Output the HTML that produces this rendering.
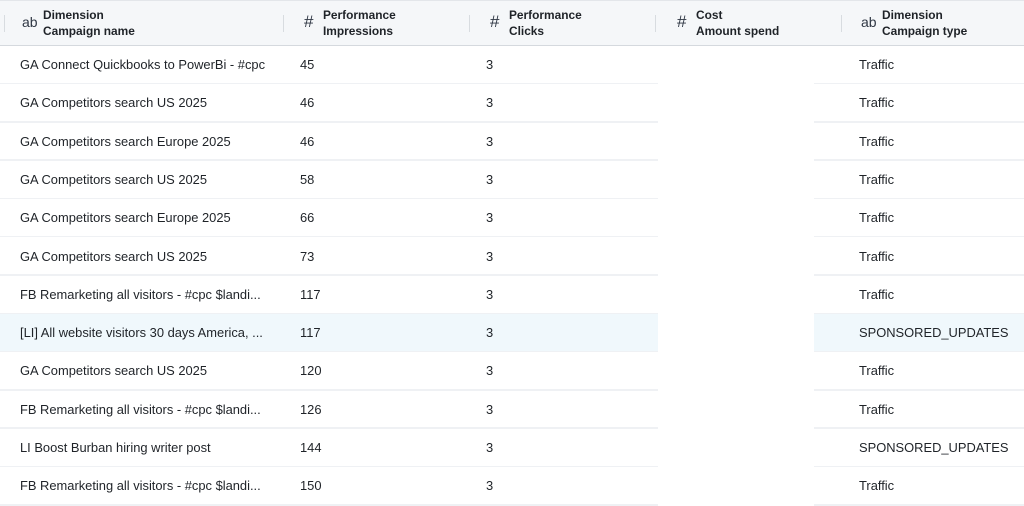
<!DOCTYPE html>
<html><head><meta charset="utf-8"><style>
*{margin:0;padding:0;box-sizing:border-box}
body{width:1024px;height:503px;overflow:hidden;background:#fff;font-family:"Liberation Sans",Arial,sans-serif;color:#1f2328;position:relative}
.hd{position:absolute;left:0;top:0;width:1024px;height:46px;background:#f5f7f9;border-top:1px solid #e3e6ea;border-bottom:1px solid #d5d9de}
.vs{position:absolute;top:14px;width:1px;height:17px;background:#d8dce0}
.ic{position:absolute;top:11px;font-size:17px;color:#2f3744}
.hl{position:absolute;top:6px;font-size:11.9px;font-weight:bold;line-height:16px;color:#1f2328}
.row{position:absolute;left:0;width:1024px;height:38.3px;font-size:12.9px}
.row span{position:absolute;top:11px;white-space:nowrap}
.sep{position:absolute;bottom:0;height:1.5px;background:#eff1f4}
.hi{position:absolute;top:0;height:37px;background:#f0f8fc}
</style></head><body>
<div class="hd">
<div class="vs" style="left:4px"></div>
<div class="ic" style="left:22px;font-size:14px;top:13px">ab</div>
<div class="hl" style="left:43px">Dimension<br>Campaign name</div>
<div class="vs" style="left:283px"></div>
<div class="ic" style="left:304px">#</div>
<div class="hl" style="left:323px">Performance<br>Impressions</div>
<div class="vs" style="left:469px"></div>
<div class="ic" style="left:490px">#</div>
<div class="hl" style="left:509px">Performance<br>Clicks</div>
<div class="vs" style="left:655px"></div>
<div class="ic" style="left:677px">#</div>
<div class="hl" style="left:696px">Cost<br>Amount spend</div>
<div class="vs" style="left:841px"></div>
<div class="ic" style="left:861px;font-size:14px;top:13px">ab</div>
<div class="hl" style="left:882px">Dimension<br>Campaign type</div>
</div>
<div id="rows"></div>
<script>
var d=[["GA Connect Quickbooks to PowerBi - #cpc","45","Traffic"],["GA Competitors search US 2025","46","Traffic"],["GA Competitors search Europe 2025","46","Traffic"],["GA Competitors search US 2025","58","Traffic"],["GA Competitors search Europe 2025","66","Traffic"],["GA Competitors search US 2025","73","Traffic"],["FB Remarketing all visitors - #cpc $landi...","117","Traffic"],["[LI] All website visitors 30 days America, ...","117","SPONSORED_UPDATES"],["GA Competitors search US 2025","120","Traffic"],["FB Remarketing all visitors - #cpc $landi...","126","Traffic"],["LI Boost Burban hiring writer post","144","SPONSORED_UPDATES"],["FB Remarketing all visitors - #cpc $landi...","150","Traffic"]];
var h="";
d.forEach(function(r,i){var t=46+i*38.3;
h+='<div class="row" style="top:'+t+'px">'+(i==7?'<div class="hi" style="left:0;width:658px"></div><div class="hi" style="left:814px;width:210px"></div>':'')+
'<span style="left:20px">'+r[0]+'</span><span style="left:300px">'+r[1]+'</span><span style="left:486px">3</span><span style="left:859px">'+r[2]+'</span>'+
'<div class="sep" style="left:0;width:658px"></div><div class="sep" style="left:814px;width:210px"></div></div>';});
document.getElementById("rows").innerHTML=h;
</script>
</body></html>
